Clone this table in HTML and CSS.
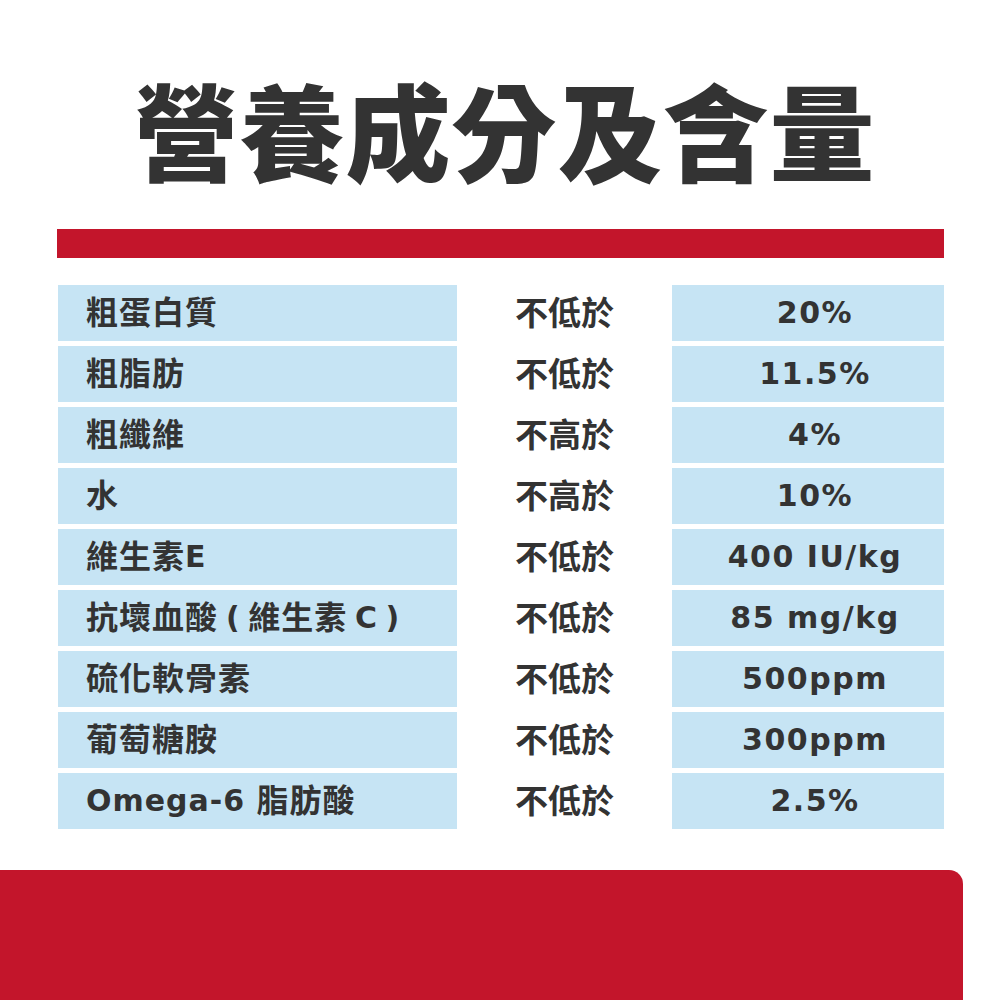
FILE: index.html
```html
<!DOCTYPE html>
<html lang="zh-Hant">
<head>
<meta charset="utf-8">
<link rel="stylesheet" href="styles.css">
</head>
<body>
<div class="page">
  <h1 class="title">營養成分及含量</h1>
  <div class="rule"></div>
  <div class="table">
    <div class="row"><div class="name">粗蛋白質</div><div class="cond">不低於</div><div class="val">20%</div></div>
    <div class="row"><div class="name">粗脂肪</div><div class="cond">不低於</div><div class="val">11.5%</div></div>
    <div class="row"><div class="name">粗纖維</div><div class="cond">不高於</div><div class="val">4%</div></div>
    <div class="row"><div class="name">水</div><div class="cond">不高於</div><div class="val">10%</div></div>
    <div class="row"><div class="name">維生素<span class="lat">E</span></div><div class="cond">不低於</div><div class="val">400 IU/kg</div></div>
    <div class="row"><div class="name">抗壞血酸<span class="lat tight"> ( </span>維生素<span class="lat tight"> C )</span></div><div class="cond">不低於</div><div class="val">85 mg/kg</div></div>
    <div class="row"><div class="name">硫化軟骨素</div><div class="cond">不低於</div><div class="val">500ppm</div></div>
    <div class="row"><div class="name">葡萄糖胺</div><div class="cond">不低於</div><div class="val">300ppm</div></div>
    <div class="row"><div class="name"><span class="lat">Omega-6 </span>脂肪酸</div><div class="cond">不低於</div><div class="val">2.5%</div></div>
  </div>
  <div class="footer"></div>
</div>
</body>
</html>
```
FILE: styles.css
```css
html, body {
  margin: 0;
  padding: 0;
  background: #ffffff;
}
.page {
  width: 1000px;
  height: 1000px;
  overflow: hidden;
  background: #ffffff;
  display: flex;
  flex-direction: column;
  color: #333333;
  font-family: "DejaVu Sans", "Noto Sans CJK TC", sans-serif;
}
.title {
  margin: 0;
  padding-top: 72px;
  height: 110px;
  box-sizing: content-box;
  font-family: "Noto Sans CJK TC", sans-serif;
  font-weight: 900;
  font-size: 105px;
  line-height: 110px;
  letter-spacing: 1px;
  text-align: center;
  color: #333333;
  padding-left: 9px;
}
.rule {
  margin: 47px 56px 0 57px;
  height: 29px;
  background: #c3152b;
}
.table {
  margin: 27px 0 0 58px;
  display: flex;
  flex-direction: column;
  gap: 5px;
}
.row {
  display: grid;
  grid-template-columns: 399px 215px 272px;
  height: 56px;
}
.name, .cond, .val {
  display: flex;
  align-items: center;
  font-weight: 700;
  font-size: 30px;
  line-height: 1;
  box-sizing: border-box;
  white-space: pre;
}
.name {
  background: #c6e4f4;
  padding-left: 28px;
  font-size: 32px;
  letter-spacing: 1px;
}
.lat {
  font-size: 30px;
}
.tight {
  letter-spacing: 0.5px;
  word-spacing: -3px;
}
.cond {
  justify-content: center;
  font-family: "Noto Sans CJK TC", sans-serif;
  font-size: 33px;
  padding-bottom: 4px;
}
.val {
  background: #c6e4f4;
  justify-content: center;
  padding-left: 14px;
  letter-spacing: 1.5px;
}
.footer {
  margin-top: 41px;
  width: 963px;
  height: 130px;
  background: #c3152b;
  border-top-right-radius: 14px;
}
```
